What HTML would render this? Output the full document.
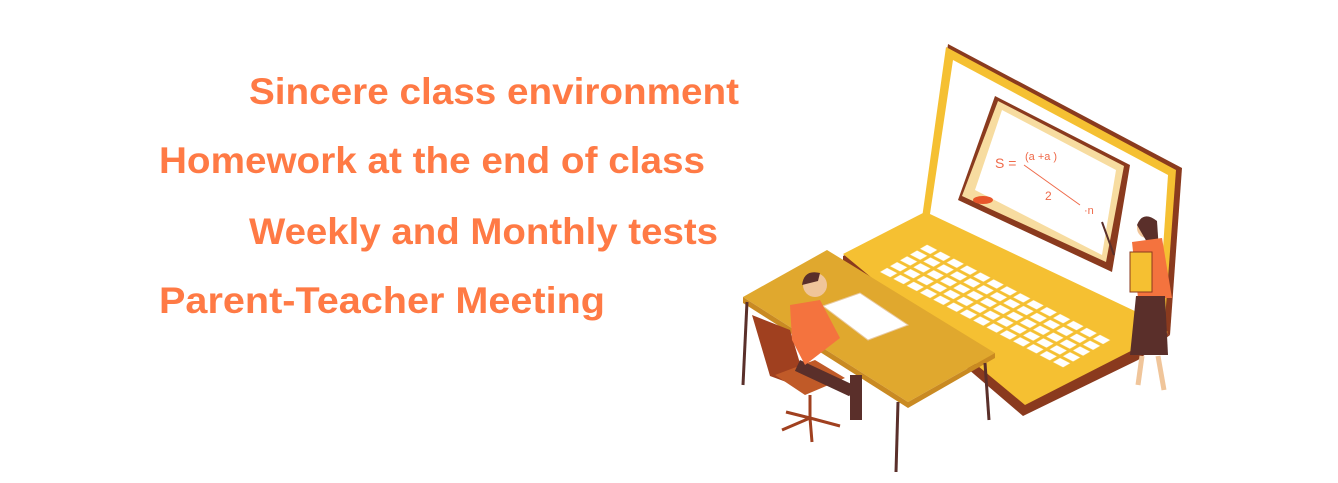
<!DOCTYPE html>
<html><head><meta charset="utf-8"><style>
html,body{margin:0;padding:0;background:#fff;width:1338px;height:483px;overflow:hidden}
svg{position:absolute;left:0;top:0}
text{font-family:"Liberation Sans",sans-serif;font-weight:bold;fill:#ff7a45;font-size:37px}
</style></head><body>
<svg width="1338" height="483" viewBox="0 0 1338 483">
<defs>
<pattern id="keys" patternUnits="userSpaceOnUse" width="1" height="1" patternTransform="matrix(10,-5.8,13.3,6.93,877,272)">
<rect x="0.15" y="0.12" width="0.7" height="0.76" fill="#fff"/>
</pattern>
</defs>
<text x="249" y="104" textLength="490" lengthAdjust="spacingAndGlyphs">Sincere class environment</text>
<text x="159" y="173" textLength="546" lengthAdjust="spacingAndGlyphs">Homework at the end of class</text>
<text x="249" y="244" textLength="469" lengthAdjust="spacingAndGlyphs">Weekly and Monthly tests</text>
<text x="159" y="313" textLength="446" lengthAdjust="spacingAndGlyphs">Parent-Teacher Meeting</text>

<!-- laptop screen -->
<polygon points="948,44 1182,168 1170,335 925,215" fill="#8a3a1e"/>
<polygon points="946,47 1176,170 1164,333 922,218" fill="#f5c032"/>
<polygon points="953,60 1168,175 1158,322 930,214" fill="#fff"/>
<!-- whiteboard -->
<polygon points="995,96 1130,165 1112,272 958,200" fill="#8a3a1e"/>
<polygon points="998,101 1124,166 1106,262 962,196" fill="#f7dca0"/>
<polygon points="1002,110 1116,170 1102,255 975,190" fill="#fff"/>
<ellipse cx="983" cy="200" rx="10" ry="4" fill="#e8562a"/>
<text x="995" y="168" style="font-size:14px;font-weight:normal;fill:#ef6a4a">S =</text>
<text x="1025" y="160" style="font-size:11px;font-weight:normal;fill:#ef6a4a">(a +a )</text>
<line x1="1024" y1="165" x2="1080" y2="205" stroke="#ef6a4a" stroke-width="1"/>
<text x="1045" y="200" style="font-size:12px;font-weight:normal;fill:#ef6a4a">2</text>
<text x="1084" y="214" style="font-size:11px;font-weight:normal;fill:#ef6a4a">·n</text>
<!-- base -->
<polygon points="843,256 925,215 1170,335 1138,360 1023,416 843,262" fill="#8a3a1e"/>
<polygon points="843,254 923,213 1168,332 1025,405" fill="#f5c032"/>
<!-- keyboard -->
<polygon points="877,272 927,243 1113,340 1063,370" fill="url(#keys)"/>
<!-- desk -->
<polygon points="743,297 827,250 995,353 908,402" fill="#e0a82e"/>
<polygon points="743,297 908,402 908,408 743,303" fill="#c98a22"/>
<polygon points="908,402 995,353 995,358 908,408" fill="#c98a22"/>
<g stroke="#5a2f2a" stroke-width="3"><line x1="747" y1="302" x2="743" y2="385"/><line x1="898" y1="402" x2="896" y2="472"/><line x1="985" y1="363" x2="989" y2="420"/></g>
<!-- notebook -->
<polygon points="823,306 860,293 908,325 868,340" fill="#fff" stroke="#e8c9a0"/>
<!-- chair -->
<polygon points="752,315 790,330 808,390 770,376" fill="#a0401f"/>
<polygon points="775,375 815,360 845,378 805,395" fill="#c05a28"/>
<g stroke="#a0401f" stroke-width="3"><line x1="810" y1="395" x2="810" y2="418"/><line x1="810" y1="418" x2="782" y2="430"/><line x1="810" y1="418" x2="840" y2="426"/><line x1="810" y1="418" x2="812" y2="442"/><line x1="810" y1="418" x2="786" y2="412"/></g>
<!-- student -->
<rect x="800" y="360" width="60" height="12" fill="#5a2f2a" transform="rotate(25 800 360)"/>
<rect x="850" y="375" width="12" height="45" fill="#5a2f2a"/>
<polygon points="790,305 820,300 840,338 805,365 792,340" fill="#f4733e"/>
<circle cx="815" cy="285" r="12" fill="#f0c59a"/>
<path d="M802,285 q2,-16 18,-12 l-2,8 z" fill="#5a2f2a"/>
<!-- teacher -->
<circle cx="1147" cy="228" r="10" fill="#f0c59a"/>
<path d="M1137,225 q6,-15 20,-4 l2,30 -8,-2z" fill="#5a2f2a"/>
<polygon points="1132,242 1162,238 1172,298 1138,298" fill="#f4733e"/>
<rect x="1130" y="252" width="22" height="40" fill="#f5c032" stroke="#8a3a1e"/>
<polygon points="1136,296 1165,296 1168,355 1130,355" fill="#5a2f2a"/>
<g stroke="#f0c59a" stroke-width="5"><line x1="1142" y1="356" x2="1138" y2="385"/><line x1="1158" y1="356" x2="1164" y2="390"/></g>
<line x1="1102" y1="222" x2="1114" y2="255" stroke="#5a2f2a" stroke-width="2"/>
</svg>
</body></html>
